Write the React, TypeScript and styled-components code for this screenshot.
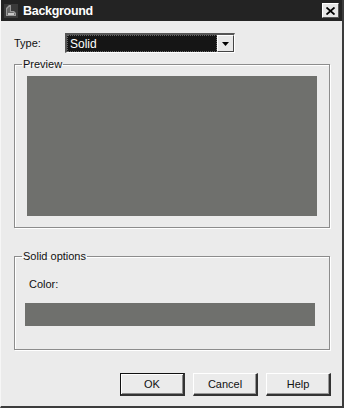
import React from "react";
import styled, { createGlobalStyle } from "styled-components";

const GlobalStyle = createGlobalStyle`
  html, body {
    margin: 0;
    padding: 0;
    background: #e9e9e9;
  }
  * {
    box-sizing: border-box;
  }
`;

const Window = styled.div`
  width: 344px;
  height: 408px;
  display: flex;
  flex-direction: column;
  background: #ebebeb;
  border-left: 1px solid #f6f6f6;
  border-right: 2px solid #3c3c3c;
  border-bottom: 2px solid #3c3c3c;
  font-family: "Liberation Sans", Arial, sans-serif;
  font-size: 11px;
  color: #111;
`;

const TitleBar = styled.div`
  height: 21px;
  display: flex;
  align-items: center;
  gap: 4px;
  padding: 0 3px 0 2px;
  background: #232323;
  color: #fff;
`;

const Title = styled.span`
  flex: 1;
  font-family: "Liberation Sans", Arial, sans-serif;
  font-weight: bold;
  font-size: 12.5px;
  letter-spacing: -0.3px;
`;

const CloseButton = styled.div`
  width: 17px;
  height: 15px;
  display: flex;
  align-items: center;
  justify-content: center;
  background: #e6e6e6;
  border-top: 1px solid #fff;
  border-left: 1px solid #fff;
  border-right: 1px solid #555;
  border-bottom: 1px solid #555;
`;

const Body = styled.div`
  flex: 1;
  display: flex;
  flex-direction: column;
  padding: 12px 13px 0 13px;
`;

const TypeRow = styled.div`
  display: flex;
  align-items: center;
  height: 20px;
`;

const Label = styled.span`
  width: 51px;
  font-size: 11px;
`;

const Select = styled.div`
  width: 170px;
  height: 20px;
  display: flex;
  border-top: 2px solid #555;
  border-left: 2px solid #555;
  border-right: 1px solid #fff;
  border-bottom: 1px solid #fff;
  background: #fff;
`;

const SelectValue = styled.div`
  flex: 1;
  background: #151515;
  color: #fff;
  font-size: 12px;
  padding-left: 2px;
  display: flex;
  align-items: center;
  border: 1px dotted #666;
`;

const DropButton = styled.div`
  width: 17px;
  display: flex;
  align-items: center;
  justify-content: center;
  background: #e8e8e8;
  border-top: 1px solid #fff;
  border-left: 1px solid #fff;
  border-right: 1px solid #444;
  border-bottom: 1px solid #444;
`;

const Group = styled.fieldset<{ $height: number; $top: number }>`
  margin: ${({ $top }) => $top}px 0 0 0;
  height: ${({ $height }) => $height}px;
  width: 316px;
  padding: 6px 12px 0 12px;
  border: 1px solid #8c8c8c;
  box-shadow: inset 1px 1px 0 #fff, 1px 1px 0 #fff;
  display: flex;
  flex-direction: column;
`;

const Legend = styled.legend`
  padding: 0 1px;
  margin-left: -5px;
  font-size: 11px;
  line-height: 12px;
`;

const Swatch = styled.div<{ $height: number; $shift?: number }>`
  width: 290px;
  height: ${({ $height }) => $height}px;
  margin-left: ${({ $shift }) => $shift ?? 0}px;
  background: #6f706d;
`;

const ColorLabel = styled.div`
  margin: 10px 0 12px 2px;
  font-size: 11px;
  line-height: 13px;
`;

const ButtonRow = styled.div`
  display: flex;
  justify-content: flex-end;
  gap: 8px;
  margin: 23px -2px 0 0;
`;

const Button = styled.div<{ $default?: boolean }>`
  width: 65px;
  height: 23px;
  display: flex;
  align-items: center;
  justify-content: center;
  font-size: 11px;
  background: #ebebeb;
  border-top: 1px solid ${({ $default }) => ($default ? "#111" : "#fff")};
  border-left: 1px solid ${({ $default }) => ($default ? "#111" : "#fff")};
  border-right: 2px solid #333;
  border-bottom: 2px solid #333;
  box-shadow: ${({ $default }) =>
    $default ? "inset 1px 1px 0 #fff, inset -1px -1px 0 #888" : "inset -1px -1px 0 #999"};
`;

function AppIcon() {
  return (
    <svg width="16" height="16" viewBox="0 0 16 16">
      <rect x="1" y="1" width="14" height="14" fill="#3a3a3a" />
      <path d="M3 13 L3 5 L6 2 L8 2 L8 8 L11 8 L13 10 L13 13 Z" fill="#9a9a9a" />
      <path d="M4 12 L4 6 L6 4 L7 4 L7 9 L10 9 L12 11 L12 12 Z" fill="#6a6a6a" />
      <rect x="5" y="10" width="6" height="2" fill="#c8c8c8" />
    </svg>
  );
}

export default function App() {
  return (
    <>
      <GlobalStyle />
      <Window>
        <TitleBar>
          <AppIcon />
          <Title>Background</Title>
          <CloseButton>
            <svg width="9" height="8" viewBox="0 0 9 8">
              <path d="M0.5 0.5 L8.5 7.5 M8.5 0.5 L0.5 7.5" stroke="#000" strokeWidth="1.8" />
            </svg>
          </CloseButton>
        </TitleBar>
        <Body>
          <TypeRow>
            <Label>Type:</Label>
            <Select>
              <SelectValue>Solid</SelectValue>
              <DropButton>
                <svg width="7" height="4" viewBox="0 0 7 4">
                  <path d="M0 0 L7 0 L3.5 4 Z" fill="#000" />
                </svg>
              </DropButton>
            </Select>
          </TypeRow>
          <Group $top={5} $height={170}>
            <Legend>Preview</Legend>
            <Swatch $height={140} />
          </Group>
          <Group $top={22} $height={100}>
            <Legend>Solid options</Legend>
            <ColorLabel>Color:</ColorLabel>
            <Swatch $height={23} $shift={-2} />
          </Group>
          <ButtonRow>
            <Button $default>OK</Button>
            <Button>Cancel</Button>
            <Button>Help</Button>
          </ButtonRow>
        </Body>
      </Window>
    </>
  );
}
